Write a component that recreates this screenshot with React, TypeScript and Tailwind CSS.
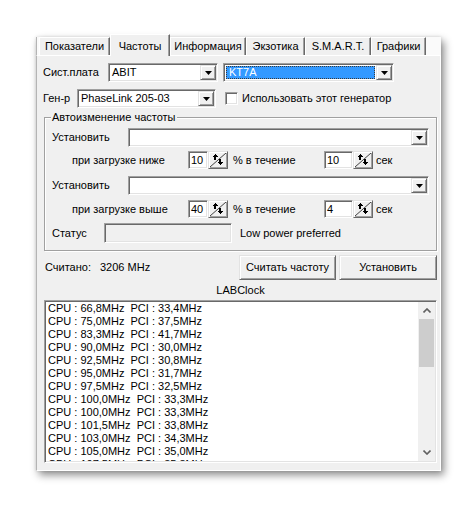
import React from "react";

const sunken =
  "border border-t-[#a0a0a0] border-l-[#a0a0a0] border-b-white border-r-white shadow-[inset_1px_1px_0_#696969,inset_-1px_-1px_0_#e3e3e3] p-[1px]";
const raised =
  "border border-t-[#e3e3e3] border-l-[#e3e3e3] border-b-[#696969] border-r-[#696969] shadow-[inset_1px_1px_0_#ffffff,inset_-1px_-1px_0_#a0a0a0] bg-[#f0f0f0]";

function DropBtn() {
  return (
    <div className={`w-[16px] h-full flex items-center justify-center ${raised}`}>
      <svg width="7" height="4" viewBox="0 0 7 4">
        <polygon points="0,0 7,0 3.5,4" fill="#000" />
      </svg>
    </div>
  );
}

function Combo({
  w,
  value,
  focused,
}: {
  w: string;
  value?: string;
  focused?: boolean;
}) {
  return (
    <div className={`${w} h-[19px] flex bg-white ${sunken}`}>
      <div className="flex-1 flex items-center min-w-0">
        {focused ? (
          <div className="ml-[1px] mr-[1px] h-[13px] flex-1 border border-dotted border-[#3a3a3a] bg-[#3399ff] text-white flex items-center pl-[2px] leading-none">
            {value}
          </div>
        ) : (
          <span className="pl-[2px] leading-none">{value}</span>
        )}
      </div>
      <DropBtn />
    </div>
  );
}

function SpinArrows() {
  return (
    <svg width="16" height="14" viewBox="0 0 16 14" shapeRendering="crispEdges">
      <line x1="0" y1="14" x2="16" y2="0" stroke="#404040" strokeWidth="1" shapeRendering="auto" />
      <polygon points="5,1 8,4 2,4" fill="#000" />
      <rect x="4" y="4" width="2" height="3" fill="#000" />
      <polygon points="10,12 13,9 7,9" fill="#000" />
      <rect x="9" y="6" width="2" height="3" fill="#000" />
    </svg>
  );
}

function Spin({ value, w }: { value: string; w: string }) {
  return (
    <div className="flex h-[18px]">
      <div className={`${w} h-full bg-white flex items-center pl-[2px] leading-none ${sunken}`}>
        {value}
      </div>
      <div className={`w-[20px] h-full flex items-center justify-center ${raised}`}>
        <SpinArrows />
      </div>
    </div>
  );
}

function Chevron({ down }: { down?: boolean }) {
  return (
    <svg width="8" height="5" viewBox="0 0 8 5">
      <polyline
        points={down ? "0.5,0.5 4,4 7.5,0.5" : "0.5,4.5 4,1 7.5,4.5"}
        fill="none"
        stroke="#606060"
        strokeWidth="1.6"
      />
    </svg>
  );
}

const tabs = [
  { label: "Показатели", w: "w-[71px]" },
  { label: "Частоты", w: "w-[60px]", active: true },
  { label: "Информация", w: "w-[76px]" },
  { label: "Экзотика", w: "w-[59px]" },
  { label: "S.M.A.R.T.", w: "w-[66px]" },
  { label: "Графики", w: "w-[55px]" },
];

const rows = [
  "CPU : 66,8MHz  PCI : 33,4MHz",
  "CPU : 75,0MHz  PCI : 37,5MHz",
  "CPU : 83,3MHz  PCI : 41,7MHz",
  "CPU : 90,0MHz  PCI : 30,0MHz",
  "CPU : 92,5MHz  PCI : 30,8MHz",
  "CPU : 95,0MHz  PCI : 31,7MHz",
  "CPU : 97,5MHz  PCI : 32,5MHz",
  "CPU : 100,0MHz  PCI : 33,3MHz",
  "CPU : 100,0MHz  PCI : 33,3MHz",
  "CPU : 101,5MHz  PCI : 33,8MHz",
  "CPU : 103,0MHz  PCI : 34,3MHz",
  "CPU : 105,0MHz  PCI : 35,0MHz",
  "CPU : 107,5MHz  PCI : 35,8MHz",
];

export default function App() {
  return (
    <div className="w-[476px] h-[507px] bg-white overflow-hidden font-['Liberation_Sans',Arial,sans-serif] text-[11px] text-black">
      <div className="pl-[36px] pt-[37px]">
        <div className="w-[405px] h-[434px] flex flex-col shadow-[3px_4px_8px_rgba(0,0,0,0.45),0_0_3px_rgba(0,0,0,0.12)] bg-[#fafafa]">
          {/* tab strip */}
          <div className="h-[18px] flex items-end pl-[2px] border-l border-l-[#b4b4b4]">
            {tabs.map((t) =>
              t.active ? (
                <div
                  key={t.label}
                  className={`${t.w} h-[22px] -mb-[1px] relative z-10 bg-[#f0f0f0] border-t border-l border-t-white border-l-white border-r border-r-[#696969] shadow-[inset_-1px_0_0_#a0a0a0] flex items-start justify-center pt-[3px]`}
                >
                  {t.label}
                </div>
              ) : (
                <div
                  key={t.label}
                  className={`${t.w} h-[18px] bg-[#f0f0f0] border-t border-l border-t-white border-l-white border-r border-r-[#696969] shadow-[inset_-1px_0_0_#a0a0a0] flex items-center justify-center`}
                >
                  {t.label}
                </div>
              )
            )}
          </div>
          {/* panel */}
          <div className="h-[416px] bg-[#f0f0f0] border-t border-t-white border-l border-l-[#b4b4b4] border-r border-r-white border-b border-b-white flex flex-col pt-[7px]">
            {/* row 1 */}
            <div className="flex items-center h-[19px] pl-[6px]">
              <div className="w-[65px]">Сист.плата</div>
              <Combo w="w-[110px]" value="ABIT" />
              <div className="w-[5px]" />
              <Combo w="w-[171px]" value="KT7A" focused />
            </div>
            {/* row 2 */}
            <div className="flex items-center h-[19px] pl-[6px] mt-[7px]">
              <div className="w-[34px]">Ген-р</div>
              <Combo w="w-[139px]" value="PhaseLink 205-03" />
              <div className={`ml-[9px] w-[13px] h-[13px] bg-white border border-t-[#a0a0a0] border-l-[#a0a0a0] border-b-white border-r-white shadow-[inset_1px_1px_0_#696969,inset_-1px_-1px_0_#e3e3e3]`} />
              <div className="ml-[4px]">Использовать этот генератор</div>
            </div>
            {/* group */}
            <div className="relative ml-[7px] mt-[9px] w-[393px] h-[134px] border border-[#a0a0a0] shadow-[inset_1px_1px_0_#ffffff,1px_1px_0_#ffffff] pt-[10px] flex flex-col">
              <div className="absolute left-[6px] -top-[7px] px-[1px] bg-[#f0f0f0] leading-[13px]">
                Автоизменение частоты
              </div>
              <div className="flex items-center h-[19px] pl-[7px]">
                <div className="w-[76px]">Установить</div>
                <Combo w="w-[301px]" value="" />
              </div>
              <div className="flex items-center h-[18px] mt-[4px] pl-[27px]">
                <div className="w-[116px]">при загрузке ниже</div>
                <Spin value="10" w="w-[20px]" />
                <div className="ml-[5px] w-[91px]">% в течение</div>
                <Spin value="10" w="w-[29px]" />
                <div className="ml-[3px]">сек</div>
              </div>
              <div className="flex items-center h-[19px] mt-[7px] pl-[7px]">
                <div className="w-[76px]">Установить</div>
                <Combo w="w-[301px]" value="" />
              </div>
              <div className="flex items-center h-[18px] mt-[5px] pl-[27px]">
                <div className="w-[116px]">при загрузке выше</div>
                <Spin value="40" w="w-[20px]" />
                <div className="ml-[5px] w-[91px]">% в течение</div>
                <Spin value="4" w="w-[29px]" />
                <div className="ml-[3px]">сек</div>
              </div>
              <div className="flex items-center h-[20px] mt-[5px] pl-[7px]">
                <div className="w-[52px]">Статус</div>
                <div className={`w-[128px] h-[20px] bg-[#f0f0f0] ${sunken}`} />
                <div className="ml-[8px]">Low power preferred</div>
              </div>
            </div>
            {/* bottom row */}
            <div className="flex items-center h-[25px] mt-[4px] pl-[8px] pr-[3px]">
              <div className="w-[55px]">Считано:</div>
              <div className="flex-1">3206 MHz</div>
              <div className={`w-[97px] h-[25px] flex items-center justify-center ${raised}`}>
                Считать частоту
              </div>
              <div className={`ml-[3px] w-[98px] h-[25px] flex items-center justify-center ${raised}`}>
                Установить
              </div>
            </div>
            <div className="ml-[7px] w-[393px] h-[13px] mt-[4px] leading-[13px] text-center">
              LABClock
            </div>
            {/* list */}
            <div className={`ml-[7px] mt-[3px] w-[393px] h-[163px] bg-white flex ${sunken}`}>
              <div className="flex-1 overflow-hidden pl-[2px]">
                {rows.map((r, i) => (
                  <div key={i} className="h-[13px] leading-[13px] whitespace-pre">
                    {r}
                  </div>
                ))}
              </div>
              <div className="w-[17px] h-full bg-[#f0f0f0] flex flex-col">
                <div className="h-[17px] flex items-center justify-center">
                  <Chevron />
                </div>
                <div className="mx-[1px] h-[48px] bg-[#cdcdcd]" />
                <div className="flex-1" />
                <div className="h-[17px] flex items-center justify-center">
                  <Chevron down />
                </div>
              </div>
            </div>
          </div>
        </div>
      </div>
    </div>
  );
}
